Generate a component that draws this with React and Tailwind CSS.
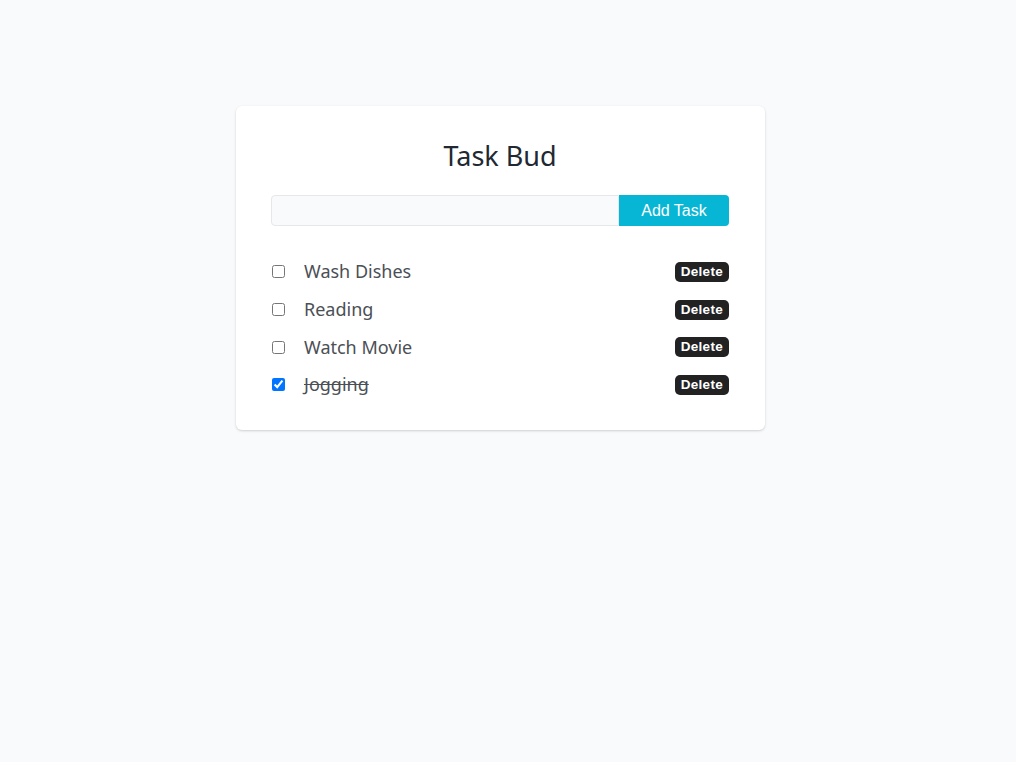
import React, { useState } from "react";

export default function App() {
  const [tasks, setTasks] = useState([
    { id: 1, text: "Wash Dishes", done: false },
    { id: 2, text: "Reading", done: false },
    { id: 3, text: "Watch Movie", done: false },
    { id: 4, text: "Jogging", done: true },
  ]);
  const [value, setValue] = useState("");

  const toggle = (id) =>
    setTasks((t) => t.map((x) => (x.id === id ? { ...x, done: !x.done } : x)));
  const remove = (id) => setTasks((t) => t.filter((x) => x.id !== id));
  const add = () => {
    if (!value.trim()) return;
    setTasks((t) => [...t, { id: Date.now(), text: value.trim(), done: false }]);
    setValue("");
  };

  return (
    <div className="min-h-screen bg-[#f9fafb] pt-[106px] font-['Noto_Sans','Open_Sans',sans-serif]">
      <div className="ml-[236px] w-[529px] rounded-md bg-white pl-[35px] pr-[36px] pt-[31px] pb-[26px] shadow-[0_1px_3px_rgba(0,0,0,0.12),0_1px_2px_rgba(0,0,0,0.06)]">
        <h1 className="text-center text-[27px] leading-[38px] text-[#222831]">Task Bud</h1>
        <div className="mt-[20px] flex h-[31px]">
          <input
            value={value}
            onChange={(e) => setValue(e.target.value)}
            className="h-full flex-1 rounded-l-[4px] border border-[#e5e7eb] bg-[#f9fafb] px-2 text-base outline-none"
          />
          <button
            onClick={add}
            className="h-full w-[110px] rounded-r-[4px] bg-[#06b6d4] font-['Liberation_Sans',Arial,sans-serif] text-[16px] font-medium text-white"
          >
            Add Task
          </button>
        </div>
        <ul className="mt-[27px]">
          {tasks.map((t) => (
            <li key={t.id} className="flex h-[37.7px] items-center">
              <input
                type="checkbox"
                checked={t.done}
                onChange={() => toggle(t.id)}
                className="m-0 ml-[1px] h-[13px] w-[13px] accent-[#0075ff]"
              />
              <span
                className={
                  "ml-[19px] flex-1 text-[18px] text-[#4b4f56] " + (t.done ? "line-through" : "")
                }
              >
                {t.text}
              </span>
              <button
                onClick={() => remove(t.id)}
                className="h-[20px] rounded-[5px] bg-[#222222] px-[6px] font-['Liberation_Sans',Arial,sans-serif] text-[13.5px] font-bold leading-[20px] tracking-[0.3px] text-white"
              >
                Delete
              </button>
            </li>
          ))}
        </ul>
      </div>
    </div>
  );
}
